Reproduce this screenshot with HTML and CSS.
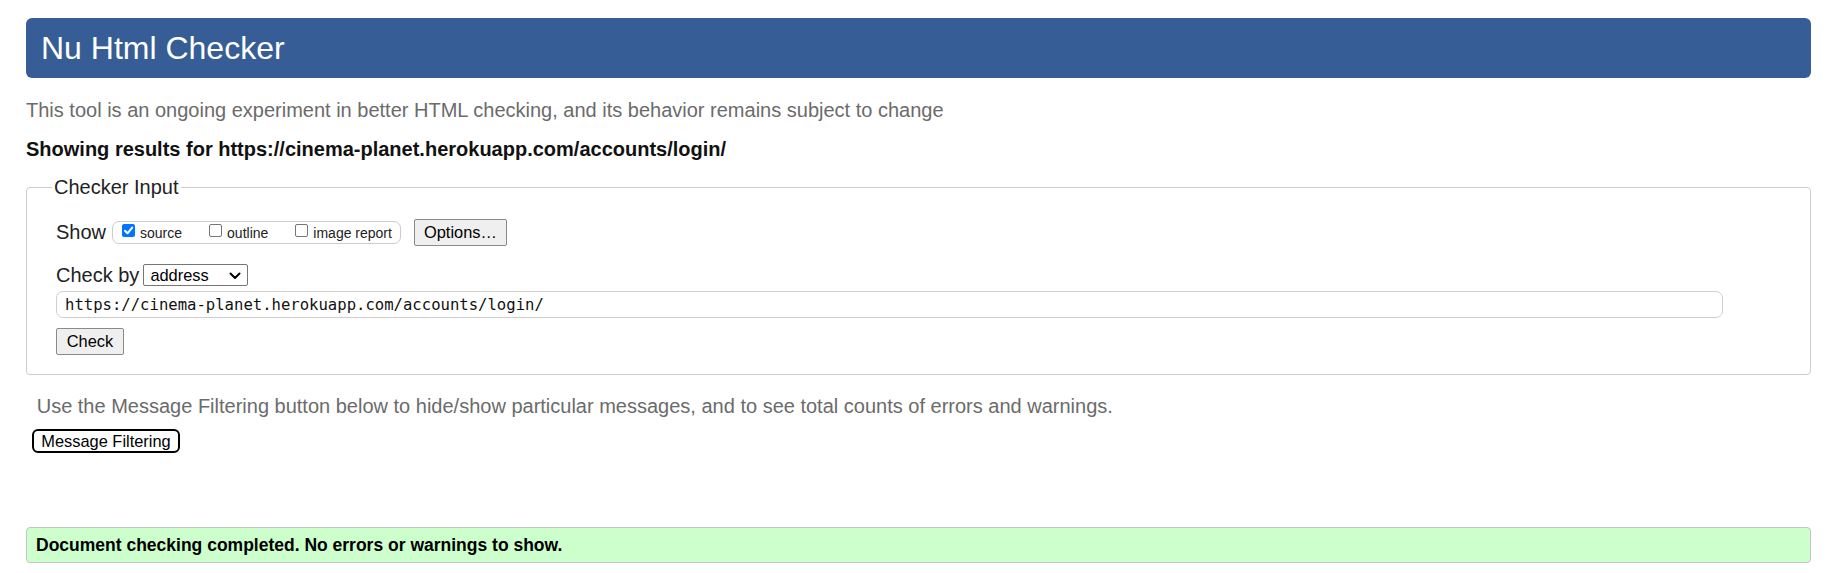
FILE: index.html
```html
<!DOCTYPE html>
<html lang="en">
<head>
<meta charset="utf-8">
<title>Nu Html Checker</title>
<link rel="stylesheet" href="styles.css">
</head>
<body>
<div class="page">
  <h1 class="title">Nu Html Checker</h1>
  <p class="intro">This tool is an ongoing experiment in better HTML checking, and its behavior remains subject to change</p>
  <p class="showing">Showing results for https://cinema-planet.herokuapp.com/accounts/login/</p>

  <fieldset class="input-box">
    <legend class="legend">Checker Input</legend>
    <div class="row show-row">
      <span class="label">Show</span>
      <span class="show-group">
        <span class="opt"><span class="cb cb-checked"><svg viewBox="0 0 13 13" width="13" height="13"><path d="M3 6.8 L5.5 9.3 L10.2 3.6" fill="none" stroke="#fff" stroke-width="2" stroke-linecap="round" stroke-linejoin="round"/></svg></span>source</span>
        <span class="opt"><span class="cb"></span>outline</span>
        <span class="opt"><span class="cb"></span>image report</span>
      </span>
      <span class="btn btn-options">Options…</span>
    </div>
    <div class="row checkby-row">
      <span class="label">Check by</span>
      <span class="select">address<svg class="chev" viewBox="0 0 12 8" width="12" height="8"><path d="M1.5 1.5 L6 6 L10.5 1.5" fill="none" stroke="#000" stroke-width="2" stroke-linecap="round" stroke-linejoin="round"/></svg></span>
    </div>
    <div class="url">https://cinema-planet.herokuapp.com/accounts/login/</div>
    <div class="row"><span class="btn btn-check">Check</span></div>
  </fieldset>

  <p class="filter-note">Use the Message Filtering button below to hide/show particular messages, and to see total counts of errors and warnings.</p>
  <div class="row"><span class="mf-btn">Message Filtering</span></div>

  <div class="success">Document checking completed. No errors or warnings to show.</div>
</div>
</body>
</html>
```

FILE: styles.css
```css
html, body {
  margin: 0;
  padding: 0;
  background: #ffffff;
}

body {
  font-family: "Liberation Sans", Arial, sans-serif;
  color: #000;
}

.page {
  padding: 18px 30px 0 26px;
  display: flex;
  flex-direction: column;
  align-items: stretch;
}

.title {
  margin: 0;
  height: 60px;
  line-height: 60px;
  padding: 0 15px;
  background: #365d95;
  color: #ffffff;
  font-size: 32px;
  font-weight: normal;
  border-radius: 6px;
}

.intro {
  margin: 21px 0 0 0;
  font-size: 20px;
  line-height: 23px;
  color: #6b6b6b;
}

.showing {
  margin: 16px 0 0 0;
  font-size: 20px;
  line-height: 23px;
  font-weight: bold;
  color: #111;
}

.input-box {
  margin: 15px 0 0 0;
  padding: 20px 28px 19px 29px;
  border: 1px solid #cccccc;
  border-radius: 4px;
  display: flex;
  flex-direction: column;
  align-items: flex-start;
  min-width: 0;
}

.legend {
  font-size: 20px;
  line-height: 23px;
  padding: 0 2px;
  margin-left: -4px;
  color: #222;
}

.row {
  display: flex;
  align-items: center;
}

.label {
  font-size: 20px;
  line-height: 23px;
  color: #222;
}

.show-row {
  height: 27px;
}

.show-group {
  margin-left: 6px;
  height: 21px;
  border: 1px solid #cccccc;
  border-radius: 7px;
  display: flex;
  align-items: center;
  padding: 0 8px 0 8px;
  gap: 26px;
}

.opt {
  display: flex;
  align-items: center;
  font-size: 14px;
  line-height: 16px;
  color: #222;
}

.cb {
  box-sizing: border-box;
  width: 13px;
  height: 13px;
  border: 1px solid #767676;
  border-radius: 2px;
  background: #fff;
  margin: 0 5px 4px 1px;
  display: block;
}

.cb-checked {
  border: none;
  background: #0075ff;
}

.cb-checked svg {
  display: block;
}

.btn {
  box-sizing: border-box;
  height: 27px;
  display: inline-flex;
  align-items: center;
  justify-content: center;
  border: 1px solid #8a8a8a;
  border-radius: 2px;
  background: #efefef;
  font-size: 16.4px;
  color: #000;
}

.btn-options {
  margin-left: 13px;
  width: 93px;
}

.checkby-row {
  margin-top: 18px;
  height: 22px;
}

.select {
  box-sizing: border-box;
  margin-left: 4px;
  width: 105px;
  height: 22px;
  border: 1px solid #767676;
  border-radius: 2px;
  background: #fff;
  display: flex;
  align-items: center;
  justify-content: space-between;
  padding: 0 6px 0 6px;
  font-size: 16.4px;
  color: #000;
}

.chev {
  display: block;
  margin-top: 1px;
}

.url {
  box-sizing: border-box;
  margin-top: 5px;
  width: 1667px;
  height: 27px;
  border: 1px solid #cfcfcf;
  border-radius: 7px;
  padding: 0 8px;
  display: flex;
  align-items: center;
  font-family: "DejaVu Sans Mono", "Liberation Mono", monospace;
  font-size: 15.6px;
  color: #111;
}

.btn-check {
  margin-top: 10px;
  width: 68px;
}

.filter-note {
  margin: 20px 0 0 10.7px;
  font-size: 20px;
  line-height: 23px;
  color: #6b6b6b;
}

.mf-btn {
  box-sizing: border-box;
  margin: 11px 0 0 6px;
  height: 24px;
  width: 148px;
  border: 2px solid #000;
  border-radius: 6px;
  background: #fff;
  display: inline-flex;
  align-items: center;
  justify-content: center;
  font-size: 16.4px;
  color: #000;
}

.success {
  margin-top: 74px;
  padding: 7px 9px;
  line-height: 20px;
  background: #ccffcc;
  border: 1px solid #c4c4c4;
  border-radius: 4px;
  font-size: 17.5px;
  font-weight: bold;
  color: #000;
}
```
